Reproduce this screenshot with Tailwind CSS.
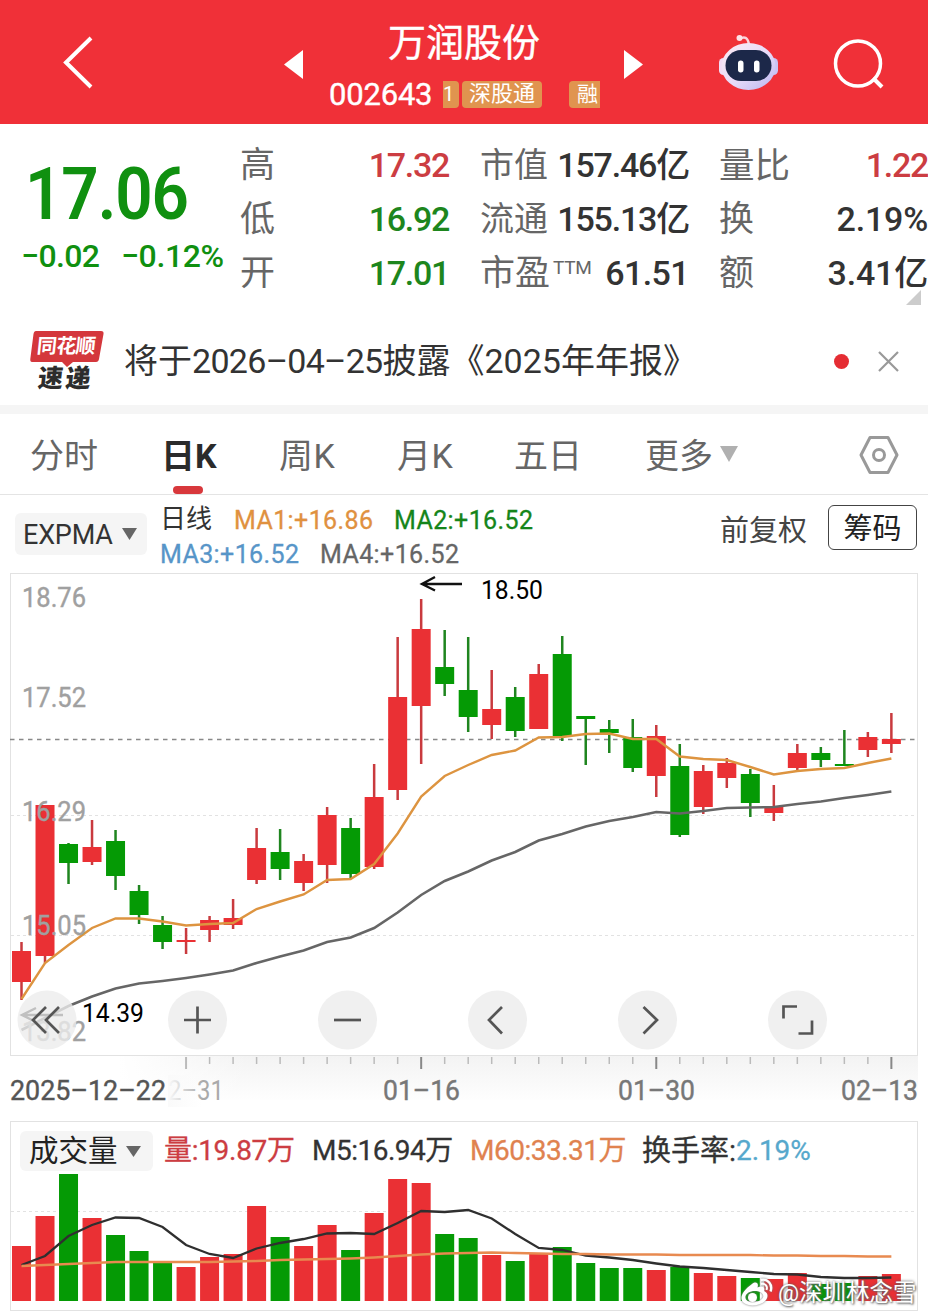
<!DOCTYPE html>
<html lang="zh-CN">
<head>
    <meta charset="UTF-8">
    <meta name="viewport" content="width=device-width, initial-scale=1.0">
    <title>万润股份 002643</title>
    <script src="https://cdn.jsdelivr.net/npm/@tailwindcss/browser@4"></script>
</head>
<body class="w-[928px] h-[1315px] overflow-hidden bg-white text-[#333] font-['Roboto','Noto_Sans_CJK_SC',sans-serif] whitespace-nowrap">

    <!-- ---------------------- Header --------------------- -->
    <header class="flex h-[124px] bg-[#f03038] text-white">
        <div class="w-[280px] pl-[60px] pt-[36px]">
            <svg class="w-[36px] h-[54px]" viewBox="0 0 36 54" fill="none" stroke="#fff" stroke-width="4">
                <path d="M31 2 L6 26.500 L31 51" />
            </svg>
        </div>
        <div class="w-[36px] pl-[4px] pt-[50px]">
            <svg class="w-[19px] h-[29px]" viewBox="0 0 19 29"><path d="M19 0 V29 L0 14.500 Z" fill="#fff" /></svg>
        </div>
        <div class="w-[296px] flex flex-col">
            <h1 class="h-[76px] pt-[22px] text-center text-[38px] leading-[42px] [-webkit-text-stroke:0.4px_#fff]">万润股份</h1>
            <div class="flex items-center h-[37px] pl-[13px]">
                <span class="w-[114px] text-[31px] leading-[38px] tracking-[-0.2px] pt-[1px] [-webkit-text-stroke:0.4px_#fff]">002643</span>
                <span class="w-[16px] h-[27px] rounded-r-sm bg-[#e0944f] text-[20px] leading-[27px] overflow-hidden">1</span>
                <span class="ml-[3px] w-[80px] h-[27px] rounded-sm bg-[#e0944f] text-center text-[22px] leading-[26px]">深股通</span>
                <span class="ml-[27px] w-[31px] h-[27px] rounded-l-sm bg-[#e0944f] pl-[8px] text-[21px] leading-[26px]">融</span>
            </div>
        </div>
        <div class="w-[96px] pl-[12px] pt-[50px]">
            <svg class="w-[19px] h-[29px]" viewBox="0 0 19 29"><path d="M0 0 V29 L19 14.500 Z" fill="#fff" /></svg>
        </div>
        <!-- robot assistant -->
        <div class="w-[124px] pl-[10px] pt-[33px]">
            <svg class="w-[62px] h-[60px]" viewBox="0 0 62 60">
                <defs>
                    <linearGradient id="shell" x1="0" y1="0" x2="1" y2="1">
                        <stop offset="0" stop-color="#fdebf4" />
                        <stop offset=".55" stop-color="#e6daf8" />
                        <stop offset="1" stop-color="#b9b4f0" />
                    </linearGradient>
                </defs>
                <path d="M22 6 C26 3 30 4 31 12" fill="none" stroke="#fbd3da" stroke-width="2.500" />
                <circle cx="21.500" cy="5" r="3" fill="#fde3e8" />
                <rect x="1" y="25" width="9" height="17" rx="4.500" fill="#f2dcf5" />
                <rect x="51" y="25" width="9" height="17" rx="4.500" fill="#c9c3f4" />
                <ellipse cx="30.500" cy="33.500" rx="27" ry="23.500" fill="url(#shell)" />
                <rect x="7.500" y="17" width="46" height="31" rx="15.500" fill="#1c2849" />
                <rect x="20" y="27.500" width="5.500" height="12" rx="2.700" fill="#fff" />
                <rect x="36" y="27.500" width="5.500" height="12" rx="2.700" fill="#fff" />
            </svg>
        </div>
        <div class="pt-[38px]">
            <svg class="w-[54px] h-[54px]" viewBox="0 0 54 54" fill="none" stroke="#fff" stroke-width="3.500">
                <circle cx="26" cy="25.500" r="22.500" />
                <path d="M41 40 L50 49" stroke-width="4" />
            </svg>
        </div>
    </header>

    <!-- ---------------------- Quote --------------------- -->
    <section class="relative flex h-[186px] text-[34px] leading-[54px]">
        <div class="w-[240px] pt-[30px] text-[#109010]">
            <div class="pl-[25px] h-[78px] text-[72px] leading-[82px] font-semibold"><span class="inline-block origin-left scale-x-[0.91] tracking-[-1.2px]">17.06</span></div>
            <div class="flex pl-[21px] pt-[2px] text-[32px] leading-[44px] font-medium">
                <span class="w-[100px] tracking-[-0.6px]">−0.02</span>
                <span class="tracking-[-0.4px]">−0.12%</span>
            </div>
        </div>
        <div class="w-[209px] pt-[14px] font-medium">
            <div class="flex justify-between h-[54px]"><span class="text-[#666] font-normal text-[35px] pt-[1px]">高</span><span class="text-[#cc3d42] tracking-[-1.3px]">17.32</span></div>
            <div class="flex justify-between h-[54px]"><span class="text-[#666] font-normal text-[35px] pt-[1px]">低</span><span class="text-[#1d861d] tracking-[-1.3px]">16.92</span></div>
            <div class="flex justify-between h-[54px]"><span class="text-[#666] font-normal text-[35px] pt-[1px]">开</span><span class="text-[#1d861d] tracking-[-1.3px]">17.01</span></div>
        </div>
        <div class="w-[209px] ml-[31px] pt-[14px] font-medium">
            <div class="flex justify-between h-[54px]"><span class="text-[#666] font-normal">市值</span><span class="tracking-[-1.2px]">157.46亿</span></div>
            <div class="flex justify-between h-[54px]"><span class="text-[#666] font-normal">流通</span><span class="tracking-[-1.2px]">155.13亿</span></div>
            <div class="flex justify-between h-[54px]"><span class="flex text-[#666] font-normal text-[35px] pt-[1px]">市盈<span class="pl-[3px] text-[19px] leading-[42px] tracking-[-0.3px]">TTM</span></span><span class="tracking-[-0.6px]">61.51</span></div>
        </div>
        <div class="w-[209px] ml-[30px] pt-[14px] font-medium">
            <div class="flex justify-between h-[54px]"><span class="text-[#666] font-normal text-[35.500px] pt-[1px]">量比</span><span class="text-[#cc3d42] tracking-[-1.3px]">1.22</span></div>
            <div class="flex justify-between h-[54px]"><span class="text-[#666] font-normal text-[35px] pt-[1px]">换</span><span class="tracking-[-0.2px]">2.19%</span></div>
            <div class="flex justify-between h-[54px]"><span class="text-[#666] font-normal text-[35px] pt-[1px]">额</span><span class="tracking-[-0.2px]">3.41亿</span></div>
        </div>
        <svg class="absolute right-[7px] top-[166px] w-[15px] h-[15px]" viewBox="0 0 15 15"><path d="M15 0 V15 H0 Z" fill="#ccc" /></svg>
    </section>

    <!-- ---------------------- News strip --------------------- -->
    <section class="flex items-center h-[95px] pt-[7px]">
        <div class="relative w-[124px] h-[62px] -mt-[7px]">
            <svg class="absolute left-[30px] top-[4px] w-[74px] h-[36px]" viewBox="0 0 74 36">
                <path d="M6 0 H71 Q74 0 73.500 3 L69 28 Q68.500 31 66 31 H43 L37 36 L32 31 H2 Q0 31 .3 28 L3.500 3 Q4 0 6 0 Z" fill="#d4373c" />
            </svg>
            <span class="absolute left-[37px] top-[6px] text-[20px] leading-[26px] font-bold text-white -skew-x-6 tracking-[-0.6px]">同花顺</span>
            <span class="absolute left-[38px] top-[38px] text-[25px] leading-[28px] font-black text-[#2c2c2c] -skew-x-6 tracking-[2.500px]">速递</span>
        </div>
        <p class="w-[710px] text-[34px] leading-[50px]">将于<span class="tracking-[-0.7px]">2026–04–25</span>披露《2025年年报》</p>
        <span class="w-[15px] h-[15px] rounded-full bg-[#e52d33]"></span>
        <svg class="ml-[29px] w-[21px] h-[21px]" viewBox="0 0 21 21" stroke="#999" stroke-width="2.200"><path d="M1 1 L20 20 M20 1 L1 20" /></svg>
    </section>
    <div class="h-[9px] bg-[#f5f5f5]"></div>

    <!-- ---------------------- Period tabs --------------------- -->
    <nav class="flex h-[81px] border-b border-[#e4e4e4] pt-[17px] text-[34px] leading-[50px] text-[#666]">
        <span class="w-[161px] pl-[30px]">分时</span>
        <span class="w-[118px] flex flex-col text-[#2b2b2b] font-bold">日K<i class="block w-[30px] h-[8px] mt-[5px] ml-[12px] rounded-full bg-[#d8383c]"></i></span>
        <span class="w-[118px] tracking-[0.600px]">周K</span>
        <span class="w-[117px] tracking-[0.600px]">月K</span>
        <span class="w-[131px]">五日</span>
        <span class="w-[75px]">更多</span>
        <svg class="w-[18px] h-[16px] mt-[15px]" viewBox="0 0 18 16"><path d="M0 0 H18 L9 16 Z" fill="#b0b0b0" /></svg>
        <svg class="ml-[121px] mt-[4px] w-[40px] h-[40px]" viewBox="0 0 40 40" fill="none" stroke="#999" stroke-width="3" stroke-linejoin="round">
            <path d="M11 2.500 H29 L38 20 L29 37.500 H11 L2 20 Z" />
            <circle cx="20" cy="20" r="5.500" />
        </svg>
    </nav>

    <!-- ---------------------- Indicator row --------------------- -->
    <section class="flex h-[78px] text-[25px]">
        <div class="flex items-center w-[132px] h-[42px] mt-[18px] ml-[15px] pl-[8px] rounded-md bg-[#f5f5f5] text-[27px]">
            <span class="w-[99px] pt-[3px] tracking-[-0.2px]">EXPMA</span>
            <svg class="w-[15px] h-[12px]" viewBox="0 0 15 12"><path d="M0 0 H15 L7.500 12 Z" fill="#666" /></svg>
        </div>
        <div class="w-[560px] pl-[13px] pt-[9px] leading-[34px] tracking-[0.400px]">
            <div class="flex">
                <span class="w-[74px] text-[26px] leading-[31px] tracking-normal">日线</span>
                <span class="w-[160px] text-[#e0913f] [-webkit-text-stroke:0.3px_#e0913f]">MA1:+16.86</span>
                <span class="text-[#15851a] [-webkit-text-stroke:0.3px_#15851a]">MA2:+16.52</span>
            </div>
            <div class="flex">
                <span class="w-[160px] text-[#5795c8] [-webkit-text-stroke:0.3px_#5795c8]">MA3:+16.52</span>
                <span class="text-[#666] [-webkit-text-stroke:0.3px_#666]">MA4:+16.52</span>
            </div>
        </div>
        <span class="w-[121px] pl-[13px] pt-[18px] text-[29px] leading-[36px] text-[#444]">前复权</span>
        <span class="w-[89px] h-[45px] mt-[10px] rounded-md border border-[#444] text-center text-[29px] leading-[46px] text-[#222]">筹码</span>
    </section>

    <!-- ---------------------- K-line and volume charts --------------------- -->
    <main class="relative">
        <svg class="block w-[928px] h-[742px]" viewBox="0 573 928 742">
            <defs>
                <linearGradient id="axisBg" x1="0" y1="0" x2="0" y2="1">
                    <stop offset="0" stop-color="#f3f3f3" />
                    <stop offset="1" stop-color="#fefefe" />
                </linearGradient>
                <linearGradient id="axisFade" x1="0" y1="0" x2="1" y2="0">
                    <stop offset="0" stop-color="#fff" />
                    <stop offset="1" stop-color="#fff" stop-opacity="0" />
                </linearGradient>
                <linearGradient id="fade" x1="0" y1="0" x2="1" y2="0">
                    <stop offset="0" stop-color="#fafafa" />
                    <stop offset="1" stop-color="#fafafa" stop-opacity="0" />
                </linearGradient>
            </defs>
            <rect x="120" y="1056" width="798" height="44" fill="url(#axisBg)" />
            <rect x="119" y="1056" width="130" height="44" fill="url(#axisFade)" />
            <g fill="none" stroke="#e2e2e2">
                <rect x="10.500" y="573.500" width="907" height="482" />
                <rect x="10.500" y="1121.500" width="907" height="189" />
                <path d="M11 815.500 H917 M11 935.500 H917 M11 1211.500 H917" stroke-dasharray="3 3" />
            </g>
            <path d="M10 739.500 H917" stroke="#888" stroke-width="1.500" stroke-dasharray="4.500 4.500" />
            <g id="candles"></g>
            <polyline id="ma1" fill="none" stroke="#dd9440" stroke-width="2.400" />
            <polyline id="ma4" fill="none" stroke="#666" stroke-width="2.600" />
            <g id="ticks"></g>
            <g id="volumes"></g>
            <polyline id="m5" fill="none" stroke="#2f2f2f" stroke-width="2.300" />
            <polyline id="m60" fill="none" stroke="#e88a50" stroke-width="2.300" />

            <!-- price axis -->
            <g font-size="27" fill="#a0a0a0" stroke="#a0a0a0" stroke-width=".4">
                <text x="22" y="607" textLength="64" lengthAdjust="spacingAndGlyphs">18.76</text>
                <text x="22" y="707" textLength="64" lengthAdjust="spacingAndGlyphs">17.52</text>
                <text x="22" y="821" textLength="64" lengthAdjust="spacingAndGlyphs">16.29</text>
                <text x="22" y="935" textLength="64" lengthAdjust="spacingAndGlyphs">15.05</text>
                <text x="22" y="1041" textLength="64" lengthAdjust="spacingAndGlyphs">13.82</text>
            </g>
            <!-- extremes -->
            <g fill="none" stroke="#111" stroke-width="2.400">
                <path d="M462 584 H423 M435 577 L422 584 L435 590.500" />
                <path d="M63 1015 H22 M36 1008 L22 1015 L36 1022" stroke="#111" />
            </g>
            <g font-size="26" fill="#000">
                <text x="481" y="599" textLength="62" lengthAdjust="spacingAndGlyphs">18.50</text>
                <text x="82" y="1022" textLength="62" lengthAdjust="spacingAndGlyphs">14.39</text>
            </g>
            <!-- chart controls -->
            <g fill="#ececec" fill-opacity=".8">
                <circle cx="47" cy="1020" r="29.500" />
                <circle cx="197.500" cy="1020" r="29.500" />
                <circle cx="347.500" cy="1020" r="29.500" />
                <circle cx="497.500" cy="1020" r="29.500" />
                <circle cx="647.500" cy="1020" r="29.500" />
                <circle cx="797.500" cy="1020" r="29.500" />
            </g>
            <g fill="none" stroke="#555" stroke-width="2.700">
                <path d="M46 1007 L33 1020 L46 1033 M59 1007 L46 1020 L59 1033" />
                <path d="M184 1020 H211 M197.500 1006.500 V1033.500" />
                <path d="M334 1020 H361" />
                <path d="M502 1007 L489 1020 L502 1033.500" />
                <path d="M643.500 1007 L657 1020 L643.500 1033.500" />
                <path d="M783.500 1018.500 V1006.500 H797 M812 1020.500 V1033.500 H798.500" />
            </g>
            <!-- date axis -->
            <g font-size="28" fill="#777">
                <text x="168" y="1100" textLength="56" lengthAdjust="spacingAndGlyphs" fill="#aaa">2–31</text>
                <rect x="168" y="1075" width="34" height="32" fill="url(#fade)" />
                <text x="10" y="1100" textLength="156" lengthAdjust="spacingAndGlyphs" fill="#555" stroke="#555" stroke-width=".4">2025–12–22</text>
                <text x="383" y="1100" textLength="77" lengthAdjust="spacingAndGlyphs" stroke="#777" stroke-width=".4">01–16</text>
                <text x="618" y="1100" textLength="77" lengthAdjust="spacingAndGlyphs" stroke="#777" stroke-width=".4">01–30</text>
                <text x="841" y="1100" textLength="77" lengthAdjust="spacingAndGlyphs" stroke="#777" stroke-width=".4">02–13</text>
            </g>
        </svg>

        <!-- volume legend -->
        <div class="absolute left-[20px] top-[558px] flex items-center h-[40px] text-[28px] leading-[40px]">
            <div class="flex items-center w-[133px] h-[40px] pl-[9px] rounded-md bg-[#f5f5f5] text-[29.500px] text-[#222]">
                <span class="w-[97px]">成交量</span>
                <svg class="w-[15px] h-[11px]" viewBox="0 0 15 11"><path d="M0 0 H15 L7.500 11 Z" fill="#666" /></svg>
            </div>
            <span class="w-[148px] pl-[11px] text-[#cc3d42] tracking-[-0.3px] [-webkit-text-stroke:0.3px_#cc3d42]">量:19.87万</span>
            <span class="w-[158px] pl-[11px] tracking-[-0.5px] [-webkit-text-stroke:0.3px_#333]">M5:16.94万</span>
            <span class="w-[172px] pl-[11px] text-[#e0824f] tracking-[-0.5px] [-webkit-text-stroke:0.3px_#e0824f]">M60:33.31万</span>
            <span class="pl-[11px] text-[29px] [-webkit-text-stroke:0.3px_#333]">换手率:</span><span class="text-[#56a8cc] tracking-[-0.1px] [-webkit-text-stroke:0.3px_#56a8cc]">2.19%</span>
        </div>

        <!-- watermark -->
        <div class="absolute left-[740px] top-[703px] flex items-center h-[34px] text-white">
            <svg class="w-[33px] h-[30px] drop-shadow-[0_0_1px_#777]" viewBox="0 0 33 30" fill="none" stroke="#fff">
                <path fill="#fff" stroke="none" fill-rule="evenodd" d="M12 6 C16 3 19 5 17.500 9.500 C22 7.500 25.500 9 24 13 C29 15 28 20 25 23 C20 28 9 29 4 25 C-1 21 1 14 12 6 Z M13 13 C7 14 4 18 6 21.500 C9 26 20 25 23 19.500 C24.500 15 19 12.500 13 13 Z" />
                <circle cx="12.500" cy="19.500" r="4.500" fill="#fff" stroke="none" />
                <path d="M21 6 C25 5 28 8 26.500 12" stroke-width="2" />
                <path d="M20.500 2 C28 0 33 7 30.500 13.500" stroke-width="2.400" />
            </svg>
            <span class="pl-[5px] text-[23.500px] leading-[34px] [text-shadow:0_0_3px_#555,1px_1px_2px_#777]">@深圳林念雪</span>
        </div>
    </main>

    <!-- ---------------------- Script --------------------- -->
    <script>
        const RED = '#ea3034';
        const GREEN = '#059a05';
        const STEP = 23.51;
        const x = i => 21.5 + i * STEP;

        // [up, high, body top, body bottom, low, volume top]
        const days = [
            [1, 942, 951, 982, 1000, 1246], [1, 805, 805, 956, 963, 1216], [0, 843, 844, 863, 884, 1174],
            [1, 820, 847, 862, 865, 1218], [0, 830, 841, 876, 890, 1235], [0, 885, 891, 915, 924, 1251],
            [0, 916, 925, 942, 949, 1262], [1, 928, 940, 942, 954, 1267], [1, 916, 920, 930, 942, 1257],
            [1, 899, 918, 925, 929, 1254], [1, 828, 848, 880, 884, 1206], [0, 829, 852, 869, 880, 1237],
            [1, 854, 861, 883, 891, 1246], [1, 807, 815, 865, 883, 1225], [0, 818, 828, 874, 878, 1250],
            [1, 764, 797, 867, 869, 1213], [1, 637, 697, 790, 800, 1179], [1, 599, 629, 706, 764, 1183],
            [0, 630, 667, 684, 696, 1234], [0, 637, 690, 717, 732, 1238], [1, 670, 709, 725, 739, 1255],
            [0, 687, 697, 731, 737, 1261], [1, 664, 674, 729, 729, 1254], [0, 636, 654, 737, 741, 1247],
            [0, 716, 716, 719, 765, 1263], [0, 720, 729, 733, 753, 1268], [0, 719, 737, 768, 772, 1268],
            [1, 725, 736, 776, 797, 1270], [0, 744, 766, 835, 837, 1267], [1, 765, 771, 807, 814, 1273],
            [1, 758, 763, 778, 788, 1276], [0, 769, 774, 803, 817, 1278], [1, 785, 807, 813, 821, 1279],
            [1, 744, 753, 768, 770, 1273], [0, 747, 753, 760, 767, 1284], [0, 730, 764, 766, 766, 1283],
            [1, 732, 737, 750, 757, 1276], [1, 713, 739, 744, 753, 1274]
        ];
        const ma1 = [999, 963, 945, 928, 918.5, 918.5, 921.5, 925.5, 924, 923, 909, 901.5, 894.5, 880, 879, 864, 833.5, 796.5, 776, 765,
            755, 750.5, 737.5, 737, 734, 733.5, 739, 739, 756.5, 759, 760, 767, 774.5, 771, 769, 768, 763, 758.5];
        const ma4 = [1030, 1018, 1006, 996.5, 988.5, 983.5, 981, 978, 974.5, 970.5, 963, 956.5, 950.5, 942, 937.5, 928, 912.5, 895, 881, 871.5,
            860.5, 852, 840.5, 834, 826.5, 821, 817, 812, 813.5, 811, 808, 807.5, 807, 804, 801.5, 798, 795, 791.5];
        const m5 = [1265, 1256, 1236, 1225, 1217.5, 1218, 1227, 1245, 1254, 1258, 1248.5, 1243, 1239, 1233.5, 1233, 1234, 1223, 1211, 1212, 1210,
            1218.5, 1234, 1248, 1250, 1255.5, 1257.5, 1260, 1263.5, 1266.5, 1268, 1270, 1272, 1274, 1274.5, 1277, 1278, 1278, 1277.5];
        const m60 = [1266, 1265, 1264, 1263, 1262, 1262, 1262, 1262, 1262, 1261.5, 1261, 1260, 1259.5, 1259, 1258.5, 1257.5, 1256, 1254.5, 1253.5, 1253,
            1252.5, 1253, 1253.5, 1254, 1254, 1254.5, 1254.5, 1254.5, 1255, 1255, 1255, 1255, 1255.5, 1255.5, 1256, 1256, 1256.5, 1256.5];

        const points = list => list.map((y, i) => `${x(i)},${y}`).join(' ');

        document.getElementById('candles').innerHTML = days.map(([up, hi, top, bottom, lo], i) => `
            <rect x="${x(i) - 1.25}" y="${hi}" width="2.5" height="${lo - hi}" fill="${up ? '#c93a3e' : '#1f851f'}" />
            <rect x="${x(i) - 9.5}" y="${top}" width="19" height="${bottom - top}" fill="${up ? RED : GREEN}" />
        `).join('');
        document.getElementById('volumes').innerHTML = days.map((d, i) =>
            `<rect x="${x(i) - 9.5}" y="${d[5]}" width="19" height="${1301 - d[5]}" fill="${d[0] ? RED : GREEN}" />`
        ).join('');
        // every tenth tick is a labelled one
        document.getElementById('ticks').innerHTML = days.map((d, i) => i < 7 ? '' :
            `<path d="M${x(i)} 1057 V${i % 10 === 7 ? 1069 : 1064}" stroke="${i > 7 && i % 10 === 7 ? '#888' : '#bbb'}" stroke-width="${i % 10 === 7 ? 2 : 1.5}" />`
        ).join('');
        document.getElementById('ma1').setAttribute('points', points(ma1));
        document.getElementById('ma4').setAttribute('points', points(ma4));
        document.getElementById('m5').setAttribute('points', points(m5));
        document.getElementById('m60').setAttribute('points', points(m60));
    </script>
</body>
</html>
